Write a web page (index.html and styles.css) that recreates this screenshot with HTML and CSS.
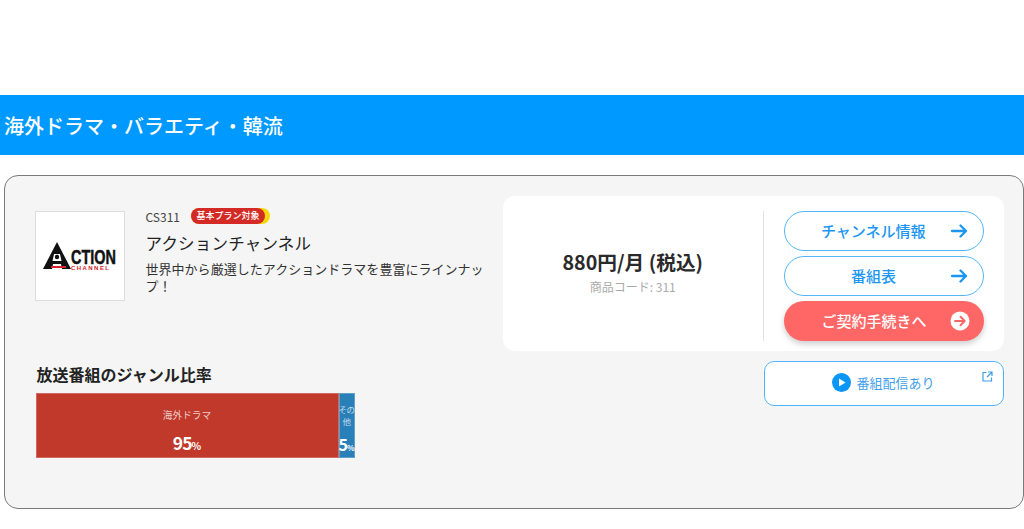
FILE: index.html
```html
<!DOCTYPE html>
<html lang="ja">
<head>
<meta charset="utf-8">
<title>アクションチャンネル</title>
<link rel="stylesheet" href="styles.css">
</head>
<body>
<h1 class="band">海外ドラマ・バラエティ・韓流</h1>
<section class="card">
  <div class="left">
    <div class="info">
      <div class="logo">
        <svg class="logo-art" width="76" height="29" viewBox="0 0 76 29">
          <path class="logo-black" d="M15 1 L29 28 H1 Z"/>
          <path class="logo-white" d="M12 13 H18 L19.500 20 H10.500 Z"/>
          <circle class="logo-black" cx="15" cy="16" r="2.200"/>
          <path class="logo-white" d="M11 23 H19 L20 28 H10 Z"/>
          <rect class="logo-red" x="9" y="25" width="15" height="2"/>
          <text class="logo-main" x="29" y="22.500" textLength="45" lengthAdjust="spacingAndGlyphs">CTION</text>
          <text class="logo-sub" x="29" y="28.500" textLength="38" lengthAdjust="spacing">CHANNEL</text>
        </svg>
      </div>
      <div class="meta">
        <div class="code-row">
          <span class="code">CS311</span>
          <span class="plan"><span class="plan-label">基本プラン対象</span></span>
        </div>
        <h2 class="name">アクションチャンネル</h2>
        <p class="desc">世界中から厳選したアクションドラマを豊富にラインナップ！</p>
      </div>
    </div>
    <h3 class="genre-title">放送番組のジャンル比率</h3>
    <div class="bar">
      <div class="seg seg-red">
        <span class="seg-label">海外ドラマ</span>
        <span class="seg-val">95<small>%</small></span>
      </div>
      <div class="seg seg-blue">
        <span class="seg-label seg-label-narrow">その<br>他</span>
        <span class="seg-val seg-val-narrow">5<small>%</small></span>
      </div>
    </div>
  </div>
  <div class="right">
    <div class="panel">
      <div class="price-box">
        <div class="price">880円/月 (税込)</div>
        <div class="sku">商品コード: 311</div>
      </div>
      <div class="actions">
        <a class="btn btn-line"><span>チャンネル情報</span>
          <svg class="btn-icon" width="18" height="14" viewBox="0 0 18 14"><path d="M2 7H16M10.500 1.500 16 7 10.500 12.500"/></svg>
        </a>
        <a class="btn btn-line"><span>番組表</span>
          <svg class="btn-icon" width="18" height="14" viewBox="0 0 18 14"><path d="M2 7H16M10.500 1.500 16 7 10.500 12.500"/></svg>
        </a>
        <a class="btn btn-primary"><span>ご契約手続きへ</span>
          <svg class="btn-icon-circle" width="20" height="20" viewBox="0 0 20 20"><circle cx="10" cy="10" r="9.500"/><path d="M5 10H14.500M10.500 5.800 14.700 10 10.500 14.200"/></svg>
        </a>
      </div>
    </div>
    <a class="stream">
      <svg width="19" height="19" viewBox="0 0 19 19"><circle class="play-bg" cx="9.500" cy="9.500" r="9.500"/><path class="play-tri" d="M7 5.500 13.500 9.500 7 13.500Z"/></svg>
      <span>番組配信あり</span>
      <svg class="ext" width="11" height="11" viewBox="0 0 11 11"><path d="M4.500 1.500H1V10H9.500V6.500M6 1H10V5M10 1 5 6"/></svg>
    </a>
  </div>
</section>
</body>
</html>
```
FILE: styles.css
```css
* { box-sizing: border-box; }
html, body { margin: 0; padding: 0; }
body {
  background: #fff;
  height: 529px;
  overflow: hidden;
  padding-top: 95px;
  font-family: "Noto Sans CJK JP", "Noto Sans", sans-serif;
  color: #333;
}
.band {
  margin: 0;
  height: 60px;
  padding-left: 4px;
  background: #0099ff;
  color: #fff;
  font-size: 20px;
  font-weight: 500;
  line-height: 62px;
}
.card {
  margin: 20px 0 0 4px;
  width: 1020px;
  height: 334px;
  border: 1.500px solid #7a7a7a;
  border-radius: 14px;
  background: #f5f5f5;
  display: flex;
  justify-content: space-between;
  padding: 19.500px 19.500px 0 29.500px;
}
.left { width: 456px; padding-top: 15px; }
.info { display: flex; gap: 21px; }
.logo {
  flex: none;
  width: 90px;
  height: 90px;
  background: #fff;
  border: 1px solid #ddd;
  display: flex;
  align-items: center;
  justify-content: center;
}
.logo-art { overflow: visible; }
.logo-black { fill: #111; }
.logo-white { fill: #fff; }
.logo-red { fill: #d9232a; }
.logo-main { font: 700 20px "Liberation Sans", sans-serif; fill: #111; stroke: #111; stroke-width: .5px; }
.logo-sub { font: 700 6px "Liberation Sans", sans-serif; fill: #d9232a; }
.meta { flex: 1; min-width: 0; margin-top: -3px; }
.code-row { display: flex; align-items: center; gap: 11px; height: 16px; }
.code { font-size: 12px; color: #444; padding-top: 1px; }
.plan {
  display: block;
  height: 16px;
  width: 79px;
  border-radius: 8px;
  background: #f5d90a;
}
.plan-label {
  display: block;
  width: 74px;
  height: 16px;
  border-radius: 8px;
  background: #d32a25;
  color: #fff;
  font-size: 9px;
  font-weight: 500;
  line-height: 16px;
  text-align: center;
}
.name {
  margin: 7px 0 0;
  font-size: 16.500px;
  font-weight: 400;
  line-height: 24px;
  letter-spacing: 0.200px;
  color: #222;
}
.desc {
  margin: 5px 0 0;
  font-size: 13px;
  line-height: 17px;
  letter-spacing: 0.030px;
  color: #333;
}
.genre-title {
  margin: 61px 0 0 2px;
  font-size: 16px;
  font-weight: 700;
  line-height: 24px;
  color: #222;
}
.bar {
  display: flex;
  margin: 7px 0 0 1px;
  width: 319px;
  height: 65px;
  color: #fff;
}
.seg {
  display: flex;
  flex-direction: column;
  align-items: center;
  border: 1px solid rgba(255, 255, 255, .25);
}
.seg-red { width: 303px; background: #c0392b; }
.seg-blue { width: 16px; background: #2980b9; }
.seg-label { font-size: 9.700px; line-height: 14px; margin-top: 14px; color: #ecc9c4; }
.seg-label-narrow {
  margin-top: 9px;
  line-height: 12px;
  font-size: 8.500px;
  text-align: center;
  white-space: nowrap;
  letter-spacing: -0.500px;
  color: #c3dcec;
}
.seg-val { font-size: 17.500px; font-weight: 700; line-height: 20px; margin-top: 11px; letter-spacing: -1px; }
.seg-val small { font-size: 10px; letter-spacing: 0; }
.seg-val-narrow { margin-top: 7px; white-space: nowrap; font-size: 16px; }
.seg-val-narrow small { font-size: 8px; }
.right { width: 501px; }
.panel {
  height: 155px;
  border-radius: 12px;
  background: #fff;
  display: flex;
  align-items: flex-start;
  padding-top: 15px;
}
.price-box {
  width: 261.500px;
  height: 130px;
  border-right: 1.500px solid #e0e0e0;
  display: flex;
  flex-direction: column;
  align-items: center;
  justify-content: center;
  padding-bottom: 8px;
}
.price { font-size: 19.700px; font-weight: 700; line-height: 28px; margin-bottom: 3px; color: #2a2a2a; white-space: nowrap; }
.sku { font-size: 12px; line-height: 16px; color: #aaa; }
.actions {
  margin-left: 19.500px;
  width: 200px;
  display: flex;
  flex-direction: column;
  gap: 5px;
}
.btn {
  position: relative;
  display: flex;
  align-items: center;
  justify-content: space-between;
  height: 40px;
  border-radius: 20px;
  padding: 0 15px 0 36.500px;
  font-size: 15px;
  font-weight: 500;
}
.btn span { flex: 1; text-align: left; }
.btn-line {
  background: #fff;
  border: 1.500px solid #55b5fb;
  color: #1c96f3;
}
.btn-line:nth-child(2) span { padding-left: 30px; }
.btn-icon { fill: none; stroke: #1c96f3; stroke-width: 2.300px; stroke-linecap: round; stroke-linejoin: round; }
.btn-primary {
  background: #ff6666;
  color: #fff;
  box-shadow: 0 3px 6px rgba(0, 0, 0, .2);
  padding: 0 14px 0 38px;
}
.btn-icon-circle circle { fill: #fff; }
.btn-icon-circle path { fill: none; stroke: #ff6666; stroke-width: 2; stroke-linecap: round; stroke-linejoin: round; }
.stream {
  position: relative;
  display: flex;
  align-items: center;
  justify-content: center;
  gap: 5px;
  margin: 10px 0 0 261px;
  width: 240px;
  height: 45px;
  padding-bottom: 1px;
  border: 1.500px solid #55b5fb;
  border-radius: 10px;
  background: #fff;
  color: #3f9fe8;
  font-size: 13px;
  font-weight: 400;
}
.play-bg { fill: #0a96f7; }
.play-tri { fill: #fff; }
.ext {
  position: absolute;
  top: 9px;
  right: 10px;
  fill: none;
  stroke: #3f9fe8;
  stroke-width: 1.200px;
}
```
